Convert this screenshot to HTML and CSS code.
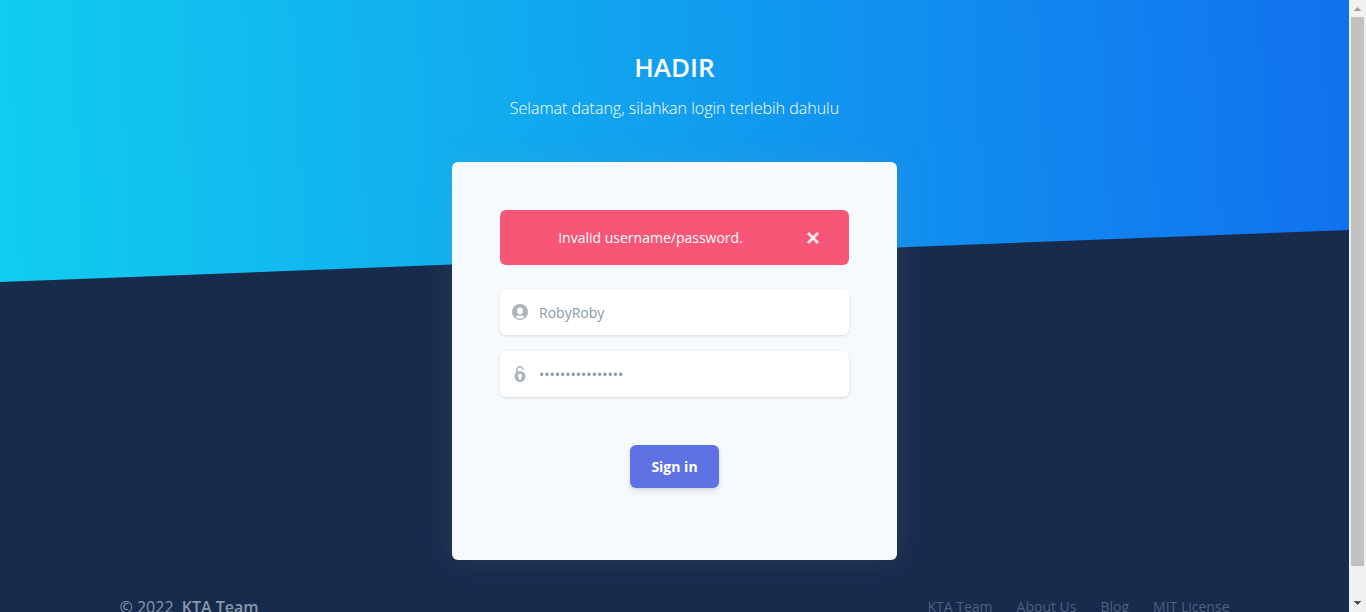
FILE: index.html
```html
<!DOCTYPE html>
<html lang="id">
<head>
<meta charset="utf-8">
<title>HADIR - Login</title>
<link rel="stylesheet" href="styles.css">
</head>
<body>
<div class="page">
  <header class="header">
    <h1 class="header-title">HADIR</h1>
    <p class="header-lead">Selamat datang, silahkan login terlebih dahulu</p>
  </header>
  <main class="main">
    <form class="card">
      <div class="alert" role="alert">
        <span class="alert-text">Invalid username/password.</span>
        <button class="alert-close" type="button" aria-label="Close">
          <svg width="12" height="12" viewBox="0 0 12 12" fill="none" stroke="currentColor" stroke-width="2.6"><path d="M1 1l10 10M11 1L1 11"/></svg>
        </button>
      </div>
      <label class="field">
        <svg class="field-icon" width="16" height="16" viewBox="0 0 16 16" fill="currentColor" fill-rule="evenodd"><path d="M8 0a8 8 0 1 0 0 16A8 8 0 0 0 8 0zM8 3.600c1.800 0 3 1.200 3 3 0 2-1.300 3.900-3 3.900S5 8.600 5 6.600c0-1.800 1.200-3 3-3zM3.600 12.800c.9-.9 2.100-1.400 3.200-1.400.8.3 1.600.3 2.400 0 1.100 0 2.300.5 3.200 1.400-1.100 1.200-2.600 1.900-4.400 1.900s-3.300-.7-4.400-1.900z"/></svg>
        <input class="field-input" type="text" value="RobyRoby" aria-label="Username">
      </label>
      <label class="field">
        <svg class="field-icon" width="16" height="16" viewBox="0 0 16 16"><path d="M4.900 7.500V3.900a3.100 3.100 0 0 1 6.200 0" fill="none" stroke="currentColor" stroke-width="1.500"/><path d="M8 5a5.500 5.500 0 1 0 0 11A5.500 5.500 0 0 0 8 5zM8 7.800a2 2 0 0 1 1 3.700V13.500H7V11.500A2 2 0 0 1 8 7.800z" fill="currentColor" fill-rule="evenodd"/></svg>
        <input class="field-input" type="password" value="RobyRobyRobyRoby" aria-label="Password">
      </label>
      <button class="submit" type="submit">Sign in</button>
    </form>
  </main>
  <footer class="footer">
    <div class="copyright">© 2022 <a class="copyright-link" href="#">KTA Team</a></div>
    <nav class="footer-nav">
      <a href="#">KTA Team</a>
      <a href="#">About Us</a>
      <a href="#">Blog</a>
      <a href="#">MIT License</a>
    </nav>
  </footer>
</div>
<div class="scrollbar" aria-hidden="true">
  <svg class="scroll-arrow scroll-arrow-up" width="7" height="4" viewBox="0 0 7 4" shape-rendering="crispEdges"><path d="M0 4L3.500 0L7 4z" fill="currentColor"/></svg>
  <div class="scroll-track"><div class="scroll-thumb"></div></div>
  <svg class="scroll-arrow scroll-arrow-down" width="7" height="4" viewBox="0 0 7 4" shape-rendering="crispEdges"><path d="M0 0h7L3.500 4z" fill="currentColor"/></svg>
</div>
</body>
</html>
```
FILE: styles.css
```css
* {
  box-sizing: border-box;
}

body {
  display: flex;
  height: 100vh;
  margin: 0;
  overflow: hidden;
  background: #172b4d;
  color: #525f7f;
  font-family: "Open Sans", sans-serif;
  font-size: 16px;
  line-height: 24px;
}

.page {
  flex: 1;
  min-width: 0;
  overflow: hidden;
}

.header {
  padding: 48px 16px 160px;
  background: linear-gradient(87deg, #11cdef 0%, #1171ef 100%);
  clip-path: polygon(0 0, 100% 0, 100% calc(100% - 52px), 0 100%);
  color: #fff;
  text-align: center;
}

.header-title {
  margin: 0 0 8px;
  font-size: 26px;
  font-weight: 600;
  line-height: 38px;
}

.header-lead {
  margin: 0;
  font-size: 16px;
  font-weight: 300;
  line-height: 28px;
}

.main {
  position: relative;
  display: flex;
  justify-content: center;
  margin-top: -120px;
}

.card {
  display: flex;
  flex-direction: column;
  width: 445px;
  padding: 48px 48px 72px;
  border-radius: 6px;
  background: #f7fafc;
  box-shadow: 0 0 32px rgba(136, 152, 170, 0.15);
}

.alert {
  display: flex;
  align-items: stretch;
  height: 55px;
  margin-bottom: 24px;
  padding-left: 24px;
  border-radius: 6px;
  background: #f75676;
  color: #fff;
  font-size: 14px;
}

.alert-text {
  flex: 1;
  align-self: center;
  text-align: center;
}

.alert-close {
  display: flex;
  align-items: center;
  justify-content: center;
  width: 72px;
  padding: 0;
  border: 0;
  background: none;
  color: rgba(255, 255, 255, 0.9);
}

.field {
  display: flex;
  align-items: center;
  gap: 11px;
  height: 46px;
  margin-bottom: 16px;
  padding: 0 12px;
  border-radius: 6px;
  background: #fff;
  box-shadow: 0 1px 3px rgba(50, 50, 93, 0.15), 0 1px 0 rgba(0, 0, 0, 0.02);
}

.field-icon {
  flex: none;
  color: #adb5bd;
}

.field-input {
  flex: 1;
  min-width: 0;
  padding: 2px 0 0;
  border: 0;
  outline: 0;
  background: none;
  color: #8898aa;
  font: inherit;
  font-size: 14px;
}

.submit {
  align-self: center;
  margin-top: 32px;
  padding: 11px 21px;
  border: 0;
  border-radius: 6px;
  background: #5e72e4;
  box-shadow: 0 4px 6px rgba(50, 50, 93, 0.11), 0 1px 3px rgba(0, 0, 0, 0.08);
  color: #fff;
  font-family: inherit;
  font-size: 14px;
  font-weight: 700;
  line-height: 21px;
}

.footer {
  display: flex;
  align-items: center;
  justify-content: space-between;
  max-width: 1110px;
  margin: 35px auto 0;
}

.copyright {
  color: #8898aa;
}

.copyright-link {
  margin-left: 4px;
  color: inherit;
  font-weight: 600;
  text-decoration: none;
}

.footer-nav {
  display: flex;
  gap: 24px;
  font-size: 14px;
}

.footer-nav a {
  color: #525f7f;
  text-decoration: none;
}

.scrollbar {
  display: flex;
  flex-direction: column;
  align-items: center;
  gap: 6px;
  width: 17px;
  padding: 7px 0;
  background: #f1f1f1;
}

.scroll-arrow {
  flex: none;
}

.scroll-arrow-up {
  color: #a3a3a3;
}

.scroll-arrow-down {
  color: #505050;
}

.scroll-track {
  flex: 1;
  width: 13px;
}

.scroll-thumb {
  height: 95%;
  background: #c1c1c1;
}
```
